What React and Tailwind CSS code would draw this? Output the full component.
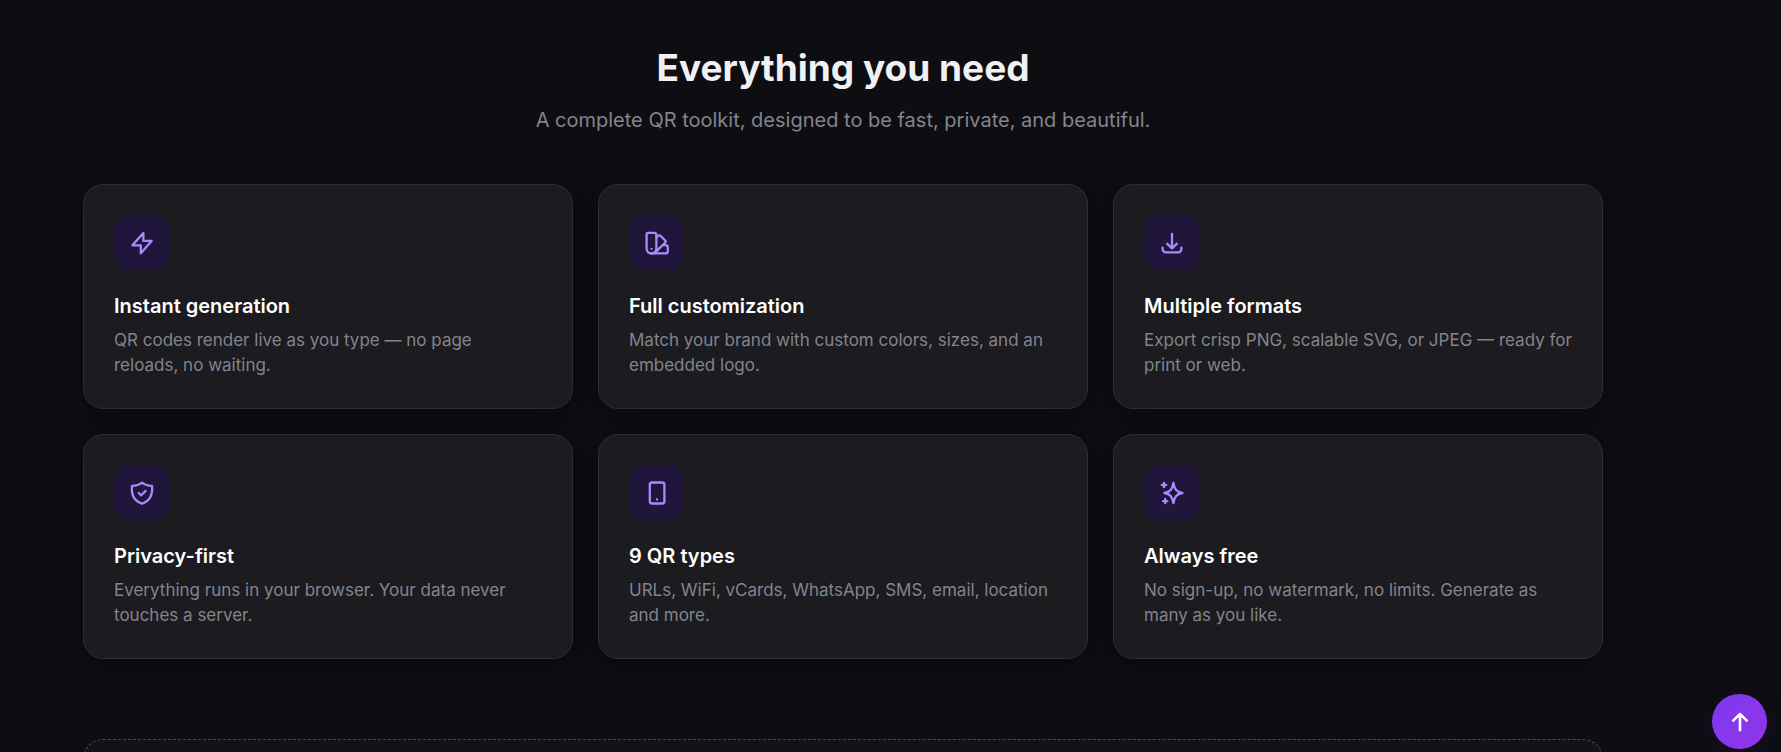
const iconProps = {
    viewBox: "0 0 26 26",
    fill: "none",
    stroke: "currentColor",
    strokeWidth: 2.3,
    strokeLinecap: "round",
    strokeLinejoin: "round",
    "aria-hidden": true,
    className: "size-[26px]",
};

const BoltIcon = () => (
    <svg {...iconProps}>
        <path d="M14.4 3V10.9H22.6L11.8 23.2V15.3H3.4Z" />
    </svg>
);

const SwatchIcon = () => (
    <svg {...iconProps}>
        <path d="M4 2.8H10Q12.4 2.8 12.4 5V18.6A4.8 4.8 0 0 1 2.6 18.6V4.4Q2.6 2.8 4 2.8Z" />
        <path d="M12.4 7.4 14 5.9Q15.4 4.8 16.8 6.1L21 10.2Q22.3 11.5 21 12.8L11 22.6" />
        <path d="M18.8 15.2H21.4Q23.8 15.2 23.8 17.4V21.2Q23.8 23.4 21.6 23.4H7.6" />
        <path d="M7.5 18.8h.01" />
    </svg>
);

const DownloadIcon = () => (
    <svg {...iconProps}>
        <path d="M13 3.8V18.2M8.2 13.8 13 18.4 17.8 13.8M3.6 17.6V19A3.4 3.4 0 0 0 7 22.4H19A3.4 3.4 0 0 0 22.4 19V17.6" />
    </svg>
);

const ShieldIcon = () => (
    <svg {...iconProps}>
        <path d="M13 2.6C10.4 4.7 6.6 5.8 3 5.8C2 14.5 4.6 20.6 13 23.6C21.4 20.6 24 14.5 23 5.8C19.4 5.8 15.6 4.7 13 2.6Z" />
        <path d="M9.8 13 12.2 15.3 16.6 10.9" />
    </svg>
);

const PhoneIcon = () => (
    <svg {...iconProps}>
        <rect x="5.8" y="2.5" width="14.6" height="21" rx="2.2" />
        <path d="M13 19.5h.01" />
    </svg>
);

const SparklesIcon = () => (
    <svg {...iconProps}>
        <path d="M14.4 3C15.6 9.6 17.4 12 23.4 13C17.4 14 15.6 16.4 14.4 23C13.2 16.4 11.4 14 5.4 13C11.4 12 13.2 9.6 14.4 3Z" />
        <path d="M5 2.8V7.2M2.8 5H7.2M6.2 19V23.2M4.1 21.1H8.3" />
    </svg>
);

const features = [
    {
        icon: BoltIcon,
        title: "Instant generation",
        text: "QR codes render live as you type — no page reloads,\u00a0no waiting.",
    },
    {
        icon: SwatchIcon,
        title: "Full customization",
        text: "Match your brand with custom colors, sizes, and an embedded logo.",
    },
    {
        icon: DownloadIcon,
        title: "Multiple formats",
        text: "Export crisp PNG, scalable SVG, or JPEG — ready for print or web.",
    },
    {
        icon: ShieldIcon,
        title: "Privacy-first",
        text: "Everything runs in your browser. Your data never touches a server.",
    },
    {
        icon: PhoneIcon,
        title: "9 QR types",
        text: "URLs, WiFi, vCards, WhatsApp, SMS, email, location and more.",
    },
    {
        icon: SparklesIcon,
        title: "Always free",
        text: "No sign-up, no watermark, no limits. Generate as many as you like.",
    },
];

function FeatureCard({ icon: Icon, title, text }) {
    return (
        <article className="rounded-[20px] border border-[#2d2d32] bg-[#1b1b20] p-[30px] shadow-[0_4px_24px_rgba(0,0,0,0.3)]">
            <div className="flex size-[55px] items-center justify-center rounded-2xl bg-[#20153a] text-[#a78bfa]">
                <Icon />
            </div>
            <h3 className="mt-5 text-[20px] leading-8 font-semibold text-white">{title}</h3>
            <p className="mt-1.5 text-[17px] leading-[25px] text-[#84848c]">{text}</p>
        </article>
    );
}

export default function App() {
    return (
        <div className="h-screen overflow-hidden bg-[#0d0d12] pr-[95px] font-['Inter',sans-serif]">
            <main className="mx-auto max-w-[1520px]">
                {/* Features */}
                <section>
                    <header className="pt-11 text-center">
                        <h2 className="text-[37px] leading-12 font-bold text-[#f1f1f4]">Everything you need</h2>
                        <p className="mt-3 text-[20px] leading-8 text-[#84848c]">
                            A complete QR toolkit, designed to be fast, private, and beautiful.
                        </p>
                    </header>
                    <div className="mt-12 grid grid-cols-3 gap-[25px]">
                        {features.map((feature) => (
                            <FeatureCard key={feature.title} {...feature} />
                        ))}
                    </div>
                </section>

                {/* Next section */}
                <section className="mt-20 h-60 rounded-[20px] border border-dashed border-[#4a4a50] bg-[#131317]" />
            </main>

            {/* Back to top */}
            <button
                type="button"
                aria-label="Back to top"
                onClick={() => window.scrollTo({ top: 0, behavior: "smooth" })}
                className="fixed right-[14px] bottom-[3px] flex size-[55px] items-center justify-center rounded-full bg-linear-to-br from-[#7c3aed] to-[#9333ea] text-white shadow-[0_4px_24px_rgba(124,58,237,0.1)]"
            >
                <svg {...iconProps} strokeWidth={2.6}>
                    <path d="M13 21.2V5M6.2 11.6 13 5 19.8 11.6" />
                </svg>
            </button>
        </div>
    );
}
